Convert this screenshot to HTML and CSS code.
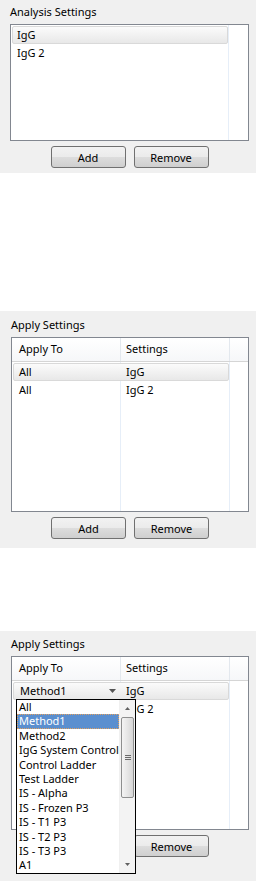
FILE: index.html
```html
<!DOCTYPE html>
<html lang="en">
<head>
  <meta charset="UTF-8">
  <title>Settings</title>
  <link rel="stylesheet" href="styles.css">
</head>
<body>
  <section class="panel panel-analysis">
    <div class="panel-title">Analysis Settings</div>
    <div class="listbox">
      <div class="list-col">
        <div class="list-row selected">IgG</div>
        <div class="list-row">IgG 2</div>
      </div>
      <div class="list-rest"></div>
    </div>
    <div class="btn-row">
      <button class="btn">Add</button>
      <button class="btn">Remove</button>
    </div>
  </section>

  <section class="panel panel-apply">
    <div class="panel-title">Apply Settings</div>
    <div class="listbox table-box">
      <div class="table-head">
        <div class="head-cell">Apply To</div>
        <div class="head-cell">Settings</div>
        <div class="head-cell last"></div>
      </div>
      <div class="table-body">
        <div class="table-row selected">
          <div class="cell">All</div>
          <div class="cell">IgG</div>
        </div>
        <div class="table-row">
          <div class="cell">All</div>
          <div class="cell">IgG 2</div>
        </div>
      </div>
    </div>
    <div class="btn-row">
      <button class="btn">Add</button>
      <button class="btn">Remove</button>
    </div>
  </section>

  <section class="panel panel-open">
    <div class="panel-title">Apply Settings</div>
    <div class="listbox table-box">
      <div class="table-head">
        <div class="head-cell">Apply To</div>
        <div class="head-cell">Settings</div>
        <div class="head-cell last"></div>
      </div>
      <div class="table-body">
        <div class="table-row selected">
          <div class="cell combo">
            <span>Method1</span>
            <svg class="combo-arrow" width="7" height="4" viewBox="0 0 7 4"><polygon points="0,0 7,0 3.5,4" fill="#555"/></svg>
          </div>
          <div class="cell">IgG</div>
        </div>
        <div class="table-row">
          <div class="cell">All</div>
          <div class="cell">IgG 2</div>
        </div>
      </div>
    </div>
    <div class="btn-row">
      <button class="btn">Add</button>
      <button class="btn">Remove</button>
    </div>

    <div class="dropdown">
      <ul class="dropdown-list">
        <li>All</li>
        <li class="active">Method1</li>
        <li>Method2</li>
        <li>IgG System Control</li>
        <li>Control Ladder</li>
        <li>Test Ladder</li>
        <li>IS - Alpha</li>
        <li>IS - Frozen P3</li>
        <li>IS - T1 P3</li>
        <li>IS - T2 P3</li>
        <li>IS - T3 P3</li>
        <li>A1</li>
      </ul>
      <div class="scrollbar">
        <div class="scroll-btn">
          <svg width="5" height="3" viewBox="0 0 5 3"><polygon points="0,3 5,3 2.5,0" fill="#606060"/></svg>
        </div>
        <div class="scroll-thumb">
          <span class="grip"></span>
        </div>
        <div class="scroll-track"></div>
        <div class="scroll-btn">
          <svg width="5" height="3" viewBox="0 0 5 3"><polygon points="0,0 5,0 2.5,3" fill="#606060"/></svg>
        </div>
      </div>
    </div>
  </section>
</body>
</html>
```

FILE: styles.css
```css
body {
  margin: 0;
  background: #fff;
  font-family: 'Segoe UI', 'Noto Sans', sans-serif;
  font-size: 11px;
  color: #000;
}

.panel {
  background: #f0f0f0;
  box-sizing: border-box;
  padding-right: 7px;
}

.panel-analysis {
  height: 173px;
  padding-top: 4px;
  padding-left: 10px;
}

.panel-apply {
  height: 237px;
  margin-top: 138px;
  padding-top: 6px;
  padding-left: 11px;
}

.panel-open {
  height: 250px;
  margin-top: 83px;
  padding-top: 5px;
  padding-left: 11px;
  position: relative;
}

.panel-title {
  height: 16px;
  line-height: 16px;
  margin-bottom: 4px;
}

.listbox {
  background: #fff;
  border: 1px solid #828790;
  box-sizing: border-box;
  height: 117px;
  display: flex;
}

.list-col {
  width: 218px;
  border-right: 1px solid #e6eef8;
  padding: 1px 0 0 1px;
  box-sizing: border-box;
}

.list-row {
  height: 18px;
  line-height: 16px;
  box-sizing: border-box;
  border: 1px solid transparent;
  padding-left: 4px;
}

.selected {
  border: 1px solid #d9d9d9;
  border-radius: 2px;
  background: linear-gradient(#fbfbfb, #e8e8e8);
}

/* table variant */
.table-box {
  height: 175px;
  flex-direction: column;
}

.panel-open .table-box {
  height: 174px;
}

.table-head {
  display: flex;
  height: 24px;
  box-sizing: border-box;
  border-bottom: 1px solid #d5d5d5;
  background: linear-gradient(#ffffff, #f6f7f9);
}

.head-cell {
  width: 109px;
  box-sizing: border-box;
  border-right: 1px solid #e3e8ee;
  padding-left: 7px;
  line-height: 22px;
}

.head-cell + .head-cell {
  padding-left: 5px;
}

.head-cell.last {
  flex: 1;
  border-right: none;
}

.table-body {
  flex: 1;
  padding-top: 1px;
  background: linear-gradient(to right,
    transparent 108px, #e6eef8 108px, #e6eef8 109px, transparent 109px,
    transparent 217px, #e6eef8 217px, #e6eef8 218px, transparent 218px);
}

.table-row {
  display: flex;
  width: 216px;
  height: 18px;
  margin-left: 1px;
  box-sizing: border-box;
  border: 1px solid transparent;
  line-height: 16px;
}

.table-row.selected {
  border-color: #d9d9d9;
}

.cell {
  width: 107px;
  padding-left: 5px;
  box-sizing: border-box;
}

.combo {
  display: flex;
  align-items: center;
  padding-left: 6px;
  padding-right: 5px;
  justify-content: space-between;
}

.btn-row {
  display: flex;
  justify-content: center;
  gap: 8px;
  margin-top: 5px;
}

.btn {
  width: 75px;
  height: 22px;
  border: 1px solid #707070;
  border-radius: 3px;
  background: linear-gradient(#f2f2f2 0%, #ebebeb 50%, #dddddd 50%, #cfcfcf 100%);
  font-family: inherit;
  font-size: 11px;
  color: #000;
  padding: 0;
}

/* open combo popup */
.dropdown {
  position: absolute;
  left: 16px;
  top: 68px;
  width: 120px;
  height: 175px;
  box-sizing: border-box;
  border: 1px solid #000;
  background: #fff;
  display: flex;
}

.dropdown-list {
  list-style: none;
  margin: 0;
  padding: 0;
  width: 102px;
}

.dropdown-list li {
  height: 14.4px;
  line-height: 14px;
  padding-left: 2px;
  white-space: nowrap;
  overflow: hidden;
}

.dropdown-list li.active {
  background: #5b8fcf;
  color: #fff;
  outline: 1px dotted #e0a060;
  outline-offset: -1px;
}

.scrollbar {
  flex: 1;
  display: flex;
  flex-direction: column;
  align-items: center;
  background: #f3f3f3;
  border-left: 1px solid #f0f0f0;
}

.scroll-btn {
  height: 17px;
  width: 100%;
  display: flex;
  align-items: center;
  justify-content: center;
}

.scroll-thumb {
  width: 13px;
  height: 81px;
  box-sizing: border-box;
  border: 1px solid #8e8f8f;
  border-radius: 2px;
  background: linear-gradient(to right, #f4f4f4, #e6e6e6 50%, #d6d6d6);
  display: flex;
  align-items: center;
  justify-content: center;
}

.grip {
  width: 6px;
  height: 5px;
  background: repeating-linear-gradient(#6a6a6a 0, #6a6a6a 1px, transparent 1px, transparent 2px);
}

.scroll-track {
  flex: 1;
}
```
